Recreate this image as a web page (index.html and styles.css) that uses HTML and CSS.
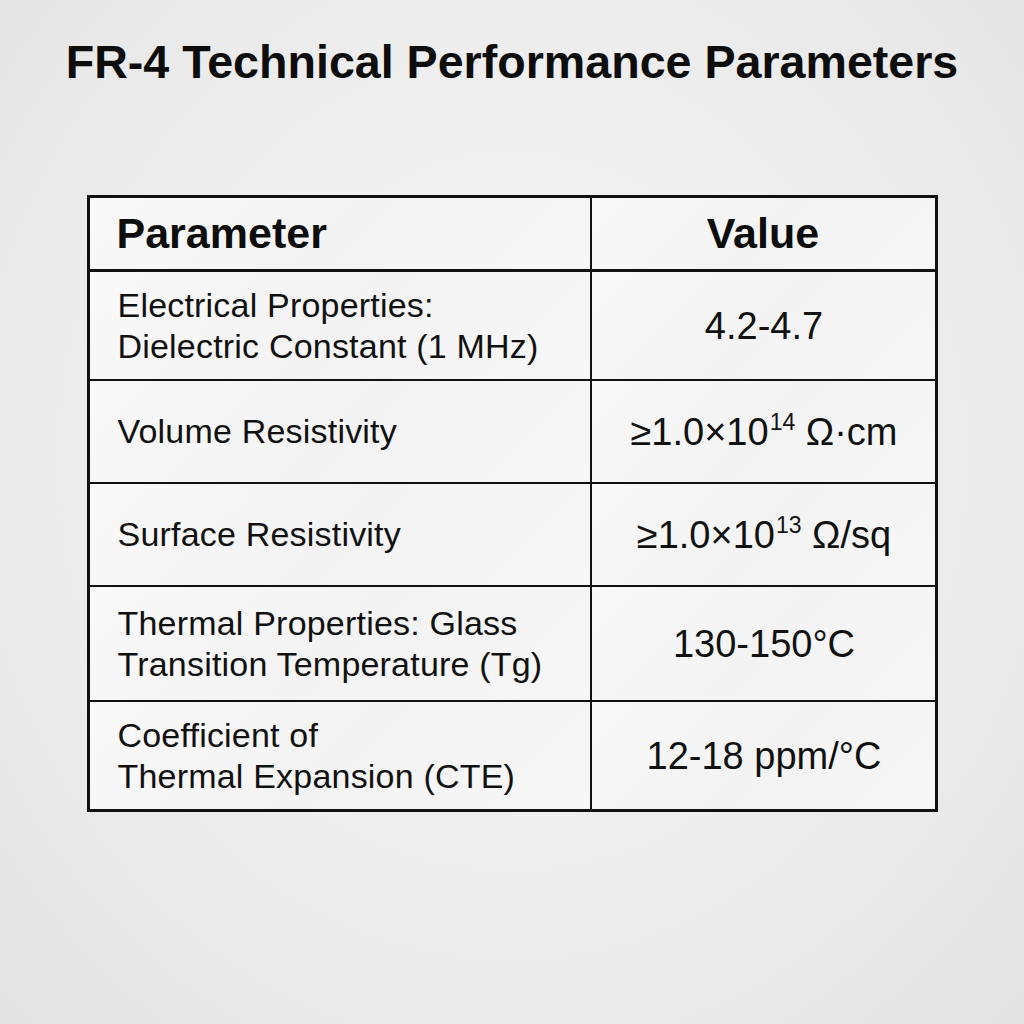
FILE: index.html
```html
<!DOCTYPE html>
<html lang="en">
<head>
<meta charset="utf-8">
<title>FR-4 Technical Performance Parameters</title>
<link rel="stylesheet" href="styles.css">
</head>
<body>
<main class="page">
  <h1 class="title">FR-4 Technical Performance Parameters</h1>
  <div class="spec-table">
    <div class="cell head head-param">Parameter</div>
    <div class="cell head head-value">Value</div>

    <div class="cell param">Electrical Properties:<br>Dielectric Constant (1 MHz)</div>
    <div class="cell value">4.2-4.7</div>

    <div class="cell param">Volume Resistivity</div>
    <div class="cell value"><span>≥1.0×10<sup>14</sup> Ω·cm</span></div>

    <div class="cell param">Surface Resistivity</div>
    <div class="cell value"><span>≥1.0×10<sup>13</sup> Ω/sq</span></div>

    <div class="cell param">Thermal Properties: Glass<br>Transition Temperature (Tg)</div>
    <div class="cell value">130-150°C</div>

    <div class="cell param">Coefficient of<br>Thermal Expansion (CTE)</div>
    <div class="cell value">12-18 ppm/°C</div>
  </div>
</main>
</body>
</html>
```

FILE: styles.css
```css
html, body {
  margin: 0;
  padding: 0;
}

body {
  width: 1024px;
  height: 1024px;
  background: radial-gradient(ellipse at 50% 45%, #f6f6f6 0%, #efefef 45%, #e4e4e4 100%);
  font-family: "Liberation Sans", Arial, sans-serif;
  color: #111;
  overflow: hidden;
}

.page {
  display: flex;
  flex-direction: column;
  align-items: center;
}

.title {
  margin: 34px 0 0;
  font-size: 46.6px;
  line-height: 56px;
  font-weight: 700;
  color: #0d0d0d;
  letter-spacing: 0;
}

.spec-table {
  margin-top: 105px;
  display: grid;
  grid-template-columns: 500px 343px;
  grid-template-rows: 72px 107px 101px 101px 113px 107px;
  column-gap: 2px;
  row-gap: 2px;
  background: #111;
  border: 3px solid #111;
}

.cell {
  background: linear-gradient(135deg, #f9f9f9 0%, #f3f3f3 50%, #f7f7f7 100%);
  display: flex;
  align-items: center;
}

.head {
  font-weight: 700;
  font-size: 43px;
  border-bottom: 1px solid #111;
  color: #0d0d0d;
}

.head-param {
  padding-left: 27px;
}

.head-value {
  justify-content: center;
}

.param {
  padding-left: 28px;
  font-size: 34px;
  line-height: 41px;
  letter-spacing: 0.2px;
}

.value {
  justify-content: center;
  font-size: 38px;
  line-height: 44px;
  padding-left: 2px;
}

.value sup {
  font-size: 23px;
  line-height: 0;
  position: relative;
  top: -1px;
  margin-left: 1px;
}
```
